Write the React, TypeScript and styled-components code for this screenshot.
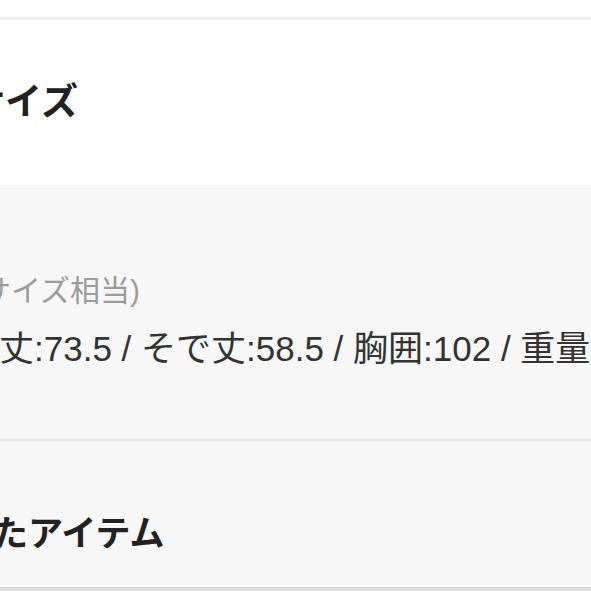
import React from "react";
import styled, { createGlobalStyle } from "styled-components";

const GlobalStyle = createGlobalStyle`
  html, body { margin: 0; padding: 0; background: #ffffff; }
  body { overflow: hidden; }
`;

const Page = styled.div`
  width: 591px;
  height: 591px;
  overflow: hidden;
  background: #ffffff;
  font-family: "Liberation Sans", "Noto Sans CJK JP", sans-serif;
  color: #333333;
`;

/* the screenshot is a crop of a wider page: its content column starts left of the view */
const Column = styled.div`
  margin-left: -36px;
  width: calc(100% + 36px);
`;

const TopGap = styled.div`
  height: 17px;
  background: #ffffff;
`;

const TitleBlock = styled.section`
  border-top: 3px solid #f0f0f0;
  background: #ffffff;
  height: 165px;
  display: flex;
  align-items: center;
`;

const Heading = styled.h2<{ $indent?: number; $size?: number }>`
  margin: 0;
  text-indent: ${(p) => p.$indent ?? 0}px;
  font-size: ${(p) => p.$size ?? 36}px;
  line-height: 48px;
  font-weight: 700;
  color: #222222;
  white-space: nowrap;
`;

const SpecPanel = styled.section`
  background: #f7f7f7;
  height: 256px;
  box-sizing: border-box;
  border-bottom: 2px solid #e8e8e8;
  padding-top: 86px;
  display: flex;
  flex-direction: column;
  gap: 16px;
`;

const SubText = styled.p<{ $indent?: number }>`
  margin: 0;
  text-indent: ${(p) => p.$indent ?? 0}px;
  font-size: 30px;
  line-height: 40px;
  color: #9b9b9b;
  white-space: nowrap;
`;

const SpecText = styled.p<{ $indent?: number }>`
  margin: 0;
  text-indent: ${(p) => p.$indent ?? 0}px;
  font-size: 35px;
  line-height: 44px;
  color: #333333;
  white-space: nowrap;
`;

const RelatedBlock = styled.section`
  background: #f7f7f7;
  height: 144px;
  box-sizing: border-box;
  padding-top: 69px;
`;

const BottomEdge = styled.div`
  border-top: 2px solid #ffffff;
  background: #dddddd;
  height: 10px;
`;

export default function App() {
  return (
    <Page>
      <GlobalStyle />
      <Column>
        <TopGap />
        <TitleBlock>
          <Heading $indent={4} $size={37}>サイズ</Heading>
        </TitleBlock>
        <SpecPanel>
          <SubText $indent={-8}>Mサイズ相当)</SubText>
          <SpecText>着丈:73.5 / そで丈:58.5 / 胸囲:102 / 重量:380</SpecText>
        </SpecPanel>
        <RelatedBlock>
          <Heading $indent={-76} $size={35}>最近見たアイテム</Heading>
        </RelatedBlock>
        <BottomEdge />
      </Column>
    </Page>
  );
}
